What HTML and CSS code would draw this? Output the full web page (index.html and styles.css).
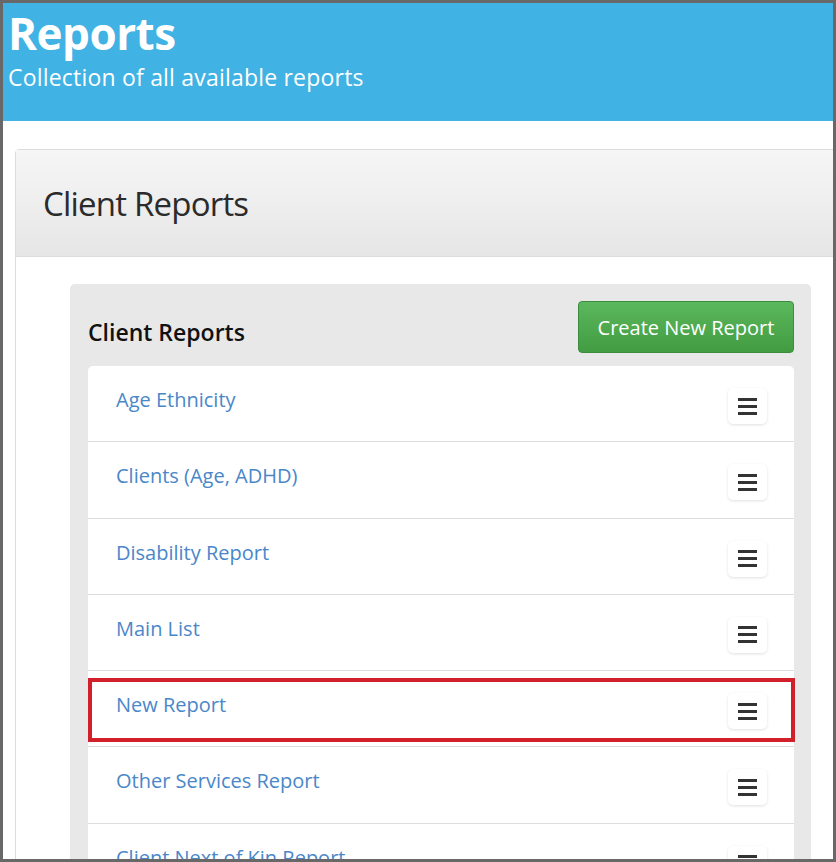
FILE: index.html
```html
<!DOCTYPE html>
<html lang="en">

<head>
    <meta charset="UTF-8">
    <meta name="viewport" content="width=device-width, initial-scale=1.0">
    <title>Reports</title>
    <link rel="stylesheet" href="styles.css">
</head>

<body>

    <div class="frame">
        <!-- Page header -->
        <div class="page-header">
            <h1>Reports</h1>
            <p>Collection of all available reports</p>
        </div>

        <div class="content">
            <div class="panel">
                <div class="panel-heading">
                    <h2>Client Reports</h2>
                </div>
                <div class="panel-body">

                    <div class="well">
                        <div class="well-top">
                            <h3>Client Reports</h3>
                            <button class="btn-create">Create New Report</button>
                        </div>

                        <ul class="report-list">
                            <li class="report-item">
                                <a href="#">Age Ethnicity</a>
                                <button class="menu-btn"><span></span><span></span><span></span></button>
                            </li>
                            <li class="report-item">
                                <a href="#">Clients (Age, ADHD)</a>
                                <button class="menu-btn"><span></span><span></span><span></span></button>
                            </li>
                            <li class="report-item">
                                <a href="#">Disability Report</a>
                                <button class="menu-btn"><span></span><span></span><span></span></button>
                            </li>
                            <li class="report-item">
                                <a href="#">Main List</a>
                                <button class="menu-btn"><span></span><span></span><span></span></button>
                            </li>
                            <li class="report-item highlighted">
                                <a href="#">New Report</a>
                                <button class="menu-btn"><span></span><span></span><span></span></button>
                            </li>
                            <li class="report-item">
                                <a href="#">Other Services Report</a>
                                <button class="menu-btn"><span></span><span></span><span></span></button>
                            </li>
                            <li class="report-item">
                                <a href="#">Client Next of Kin Report</a>
                                <button class="menu-btn"><span></span><span></span><span></span></button>
                            </li>
                        </ul>
                    </div>

                </div>
            </div>
        </div>
    </div>

</body>

</html>
```

FILE: styles.css
```css
/* General Reset */
* {
    margin: 0;
    padding: 0;
    box-sizing: border-box;
}

body {
    font-family: "Open Sans", "Noto Sans", sans-serif;
    background-color: #fff;
    color: #333;
}

/* Screenshot frame */
.frame {
    width: 836px;
    height: 862px;
    border: 3px solid #686868;
    overflow: hidden;
    background-color: #fff;
}

/* Blue header */
.page-header {
    background-color: #40b2e3;
    color: white;
    height: 118px;
    padding: 2px 5px 0;
}

.page-header h1 {
    font-size: 44px;
    font-weight: bold;
    line-height: 56px;
    letter-spacing: -0.5px;
}

.page-header p {
    font-size: 23px;
    line-height: 30px;
    margin-top: 1px;
    letter-spacing: 0.2px;
}

/* Outer panel */
.content {
    padding: 28px 0 0 12px;
}

.panel {
    border: 1px solid #dcdcdc;
    border-radius: 4px;
    margin-right: -14px;
}

.panel-heading {
    height: 107px;
    background: linear-gradient(to bottom, #f6f6f6, #e6e6e6);
    border-bottom: 1px solid #dcdcdc;
    display: flex;
    align-items: center;
    padding-left: 27px;
}

.panel-heading h2 {
    font-size: 33px;
    font-weight: 500;
    color: #2b2b2b;
    letter-spacing: -0.8px;
}

.panel-body {
    padding: 27px 0 0 54px;
}

/* Inner grey box */
.well {
    width: 741px;
    background-color: #e8e8e8;
    border-radius: 5px;
    padding: 17px 17px 0 18px;
}

.well-top {
    display: flex;
    justify-content: space-between;
    align-items: center;
    margin-bottom: 13px;
}

.well-top h3 {
    font-size: 23px;
    font-weight: 600;
    color: #111;
    padding-top: 10px;
    letter-spacing: 0;
}

.btn-create {
    font-family: inherit;
    font-size: 20px;
    color: white;
    background: linear-gradient(to bottom, #5cb85c, #429c42);
    border: 1px solid #3d8b3d;
    border-radius: 4px;
    width: 216px;
    height: 52px;
    cursor: pointer;
}

/* Report list */
.report-list {
    list-style: none;
    background-color: white;
    border-radius: 5px 5px 0 0;
    width: 706px;
}

.report-item {
    position: relative;
    display: flex;
    justify-content: space-between;
    align-items: flex-start;
    height: 76.3px;
    padding: 20px 27px 0 28px;
    border-bottom: 1px solid #dedede;
}

.report-item a {
    color: #4a87c9;
    text-decoration: none;
    font-size: 20px;
    line-height: 28px;
}

.menu-btn {
    width: 39px;
    height: 36px;
    margin-top: 2px;
    background-color: white;
    border: none;
    border-radius: 5px;
    box-shadow: 0 1px 3px rgba(0, 0, 0, 0.12);
    display: flex;
    flex-direction: column;
    align-items: center;
    justify-content: center;
    gap: 4px;
    cursor: pointer;
}

.menu-btn span {
    display: block;
    width: 19px;
    height: 3px;
    background-color: #333;
}

/* Red annotation box */
.highlighted::after {
    content: "";
    position: absolute;
    top: 7px;
    bottom: 4px;
    left: 0;
    right: -1px;
    border: 4px solid #d2202a;
    pointer-events: none;
}
```
